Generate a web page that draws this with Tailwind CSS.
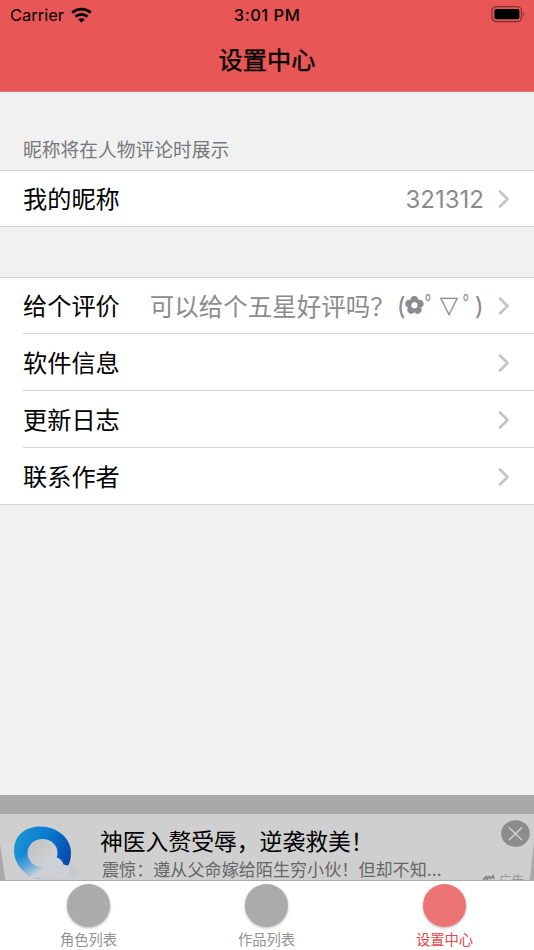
<!DOCTYPE html>
<html lang="zh-CN">
<head>
<meta charset="utf-8">
<meta name="viewport" content="width=device-width, initial-scale=1">
<title>设置中心</title>
<script src="https://cdn.jsdelivr.net/npm/@tailwindcss/browser@4"></script>
</head>
<body class="bg-[#f1f1f1]">
<svg class="hidden"><symbol id="chevron" viewBox="0 0 12 20"><path d="M2 2.5 9.5 10 2 17.5" fill="none" stroke="#c5c5c7" stroke-width="2.7" stroke-linecap="round" stroke-linejoin="round"/></symbol></svg>
<div class="flex h-[950px] w-[534px] flex-col overflow-hidden font-['Inter','Noto_Sans_CJK_SC',sans-serif] text-black">
  <header class="h-[92px] shrink-0 border-b border-[#cf7f7e] bg-[#e85655]">
    <div class="grid h-[30px] grid-cols-3 items-center pl-[10px] pr-[8px]">
      <div class="flex items-center gap-[7px]">
        <span class="text-[16.5px]">Carrier</span>
        <svg class="h-[16px] w-[21px]" viewBox="0 0 21 16" fill="none" stroke="#000" stroke-width="2.9"><path d="M1.2 5.6C6.6.9 14.4.9 19.8 5.6"/><path d="M4.5 9.6C8 6.6 13 6.6 16.5 9.6"/><path d="M10.5 15.4 7.2 12.4C9 10.8 12 10.8 13.8 12.4Z" fill="#000" stroke="none"/></svg>
      </div>
      <span class="-ml-[2px] text-center text-[16.5px] font-medium tracking-[0.5px]">3:01 PM</span>
      <svg class="h-[18px] w-[35px] justify-self-end" viewBox="0 0 35 18"><rect x="1" y="0.7" width="29.5" height="15" rx="4.2" fill="none" stroke="#7c3433" stroke-width="1.3"/><rect x="3.4" y="3.1" width="25" height="10.2" rx="1.8"/><path d="M32.3 5.8C33.9 6.8 33.9 9.5 32.3 10.5Z" fill="#7c3433"/></svg>
    </div>
    <h1 class="flex h-[61px] items-center justify-center pt-[1px] text-[24.2px] leading-none [-webkit-text-stroke:0.4px_black]">设置中心</h1>
  </header>
  <main class="flex flex-1 flex-col">
    <p class="flex h-[78px] shrink-0 items-end px-[23px] pb-[9px] text-[18.75px] leading-[20px] text-[#77777b]">昵称将在人物评论时展示</p>
    <section class="border-y border-[#d4d4d6] bg-white">
      <div class="flex h-[55px] items-center pl-[23px] pr-[24px]">
        <span class="pt-[3px] text-[24.2px] leading-none">我的昵称</span>
        <span class="ml-auto mr-[14px] pt-[2px] text-[24px] text-[#8b8b8f]">321312</span>
        <svg class="h-[20px] w-[12px]"><use href="#chevron"/></svg>
      </div>
    </section>
    <section class="mt-[50px] border-y border-[#d4d4d6] bg-white">
      <div class="flex h-[55px] items-center pl-[23px] pr-[24px]">
        <span class="pt-[3px] text-[24.2px] leading-none">给个评价</span>
        <span class="ml-[30px] flex items-center whitespace-nowrap pt-[3px] text-[24.5px] leading-none text-[#8b8b8f]"><span class="w-[247px]">可以给个五星好评吗？</span><span class="w-[8px] pb-[2px]">(</span><span class="w-[20px] pb-[3px] font-['DejaVu_Sans'] text-[23px] [-webkit-text-stroke:1.4px_#8b8b8f]">✿</span><span class="w-[15px]">ﾟ</span><span class="w-[23px] pb-[5px] font-['DejaVu_Sans'] text-[24px]">▽</span><span class="w-[12px]">ﾟ</span><span class="pb-[2px]">)</span></span>
        <svg class="ml-auto h-[20px] w-[12px]"><use href="#chevron"/></svg>
      </div>
      <div class="ml-[23px] flex h-[57px] items-center justify-between border-t border-[#d4d4d6] pr-[24px] pt-[1px]">
        <span class="pt-[3px] text-[24.2px] leading-none">软件信息</span><svg class="h-[20px] w-[12px]"><use href="#chevron"/></svg>
      </div>
      <div class="ml-[23px] flex h-[57px] items-center justify-between border-t border-[#d4d4d6] pr-[24px] pt-[1px]">
        <span class="pt-[3px] text-[24.2px] leading-none">更新日志</span><svg class="h-[20px] w-[12px]"><use href="#chevron"/></svg>
      </div>
      <div class="ml-[23px] flex h-[57px] items-center justify-between border-t border-[#d4d4d6] pr-[24px] pt-[1px]">
        <span class="pt-[3px] text-[24.2px] leading-none">联系作者</span><svg class="h-[20px] w-[12px]"><use href="#chevron"/></svg>
      </div>
    </section>
  </main>
  <aside class="h-[85px] shrink-0 overflow-hidden bg-[#a9a9a9] pt-[19px]">
    <div class="relative flex h-[66px] bg-[#cfcfcf] [clip-path:polygon(0_0,100%_0,100%_40%,99.2%_100%,1%_100%,0_45%)]">
      <svg class="h-[66px] w-[100px] shrink-0" viewBox="0 0 100 66">
        <defs>
          <linearGradient id="ring" x1="0" y1="0.2" x2="1" y2="0.6"><stop offset="0" stop-color="#1c98d5"/><stop offset=".55" stop-color="#0875cf"/><stop offset="1" stop-color="#0647a6"/></linearGradient>
          <linearGradient id="fade" gradientUnits="userSpaceOnUse" x1="22" y1="40" x2="36" y2="62"><stop offset="0" stop-color="#8fc3dc" stop-opacity="0"/><stop offset=".9" stop-color="#b9d0df"/></linearGradient>
          <linearGradient id="hole" x1="0" y1="0" x2="1" y2="1"><stop offset="0" stop-color="#bfc0c2"/><stop offset="1" stop-color="#d6d6d8"/></linearGradient>
          <filter id="soft" x="-30%" y="-30%" width="160%" height="160%"><feGaussianBlur stdDeviation="3"/></filter>
        </defs>
        <ellipse cx="60" cy="57" rx="20" ry="8" fill="#c5c8cc" filter="url(#soft)"/>
        <path d="M40 12.6C57 12.6 71 24 71 39C71 44 70 48 68.500 51L55 58L38 65C24 61 14 50 14 36C14 22 25 12.600 40 12.600Z" fill="url(#ring)"/>
        <path d="M14 36 50 36 52 58 38 65C24 61 14 50 14 36Z" fill="url(#fade)"/>
        <ellipse cx="42.5" cy="39" rx="15" ry="14" fill="url(#hole)"/>
        <path d="M26 64C35 62 40 57 45 50C47 40.500 61 40.500 63.500 50.500C67 51 70 52 70 57Q70 64 64 64Z" fill="#cdd0d6"/>
      </svg>
      <div class="pt-[15px]">
        <p class="whitespace-nowrap text-[22.8px] leading-[26px]">神医入赘受辱，逆袭救美！</p>
        <p class="mt-[5px] whitespace-nowrap pl-[2px] text-[17.1px] leading-[20px] text-[#666]">震惊：遵从父命嫁给陌生穷小伙！但却不知...</p>
      </div>
      <svg class="absolute right-[4px] top-[6px] size-[29px]" viewBox="0 0 29 29"><ellipse cx="14.5" cy="13.5" rx="14.3" ry="13.3" fill="#8c8c8c"/><path d="m8 7.5 13 12.5M21 7.5 8 20" stroke="#d0d0d0" stroke-width="1.6"/></svg>
      <div class="absolute left-[482px] top-[60px] flex gap-[4px] text-[12.5px] leading-[14px] text-[#999]"><svg class="h-[12px] w-[13px]" viewBox="0 0 13 12" fill="none" stroke="#858585" stroke-width="1.8"><path d="m1 6 4-4M4 6l4-4M8 5l3-3 1 3"/></svg><span>广告</span></div>
    </div>
  </aside>
  <nav class="-mb-px grid h-[71px] shrink-0 grid-cols-3 border-t border-[#acacac] bg-white text-[14.3px] leading-[18px] text-[#929292]">
    <div class="flex flex-col items-center pr-px pt-[3px]"><i class="size-[43px] rounded-full bg-[#ababab] shadow-[0_1px_3px_rgba(0,0,0,0.3)]"></i><span class="mt-[4px]">角色列表</span></div>
    <div class="flex flex-col items-center pr-px pt-[3px]"><i class="size-[43px] rounded-full bg-[#ababab] shadow-[0_1px_3px_rgba(0,0,0,0.3)]"></i><span class="mt-[4px]">作品列表</span></div>
    <div class="flex flex-col items-center pr-px pt-[3px] text-[#e7484a]"><i class="size-[43px] rounded-full bg-[#ec7474] shadow-[0_1px_3px_rgba(0,0,0,0.3)]"></i><span class="mt-[4px]">设置中心</span></div>
  </nav>
</div>
</body>
</html>
